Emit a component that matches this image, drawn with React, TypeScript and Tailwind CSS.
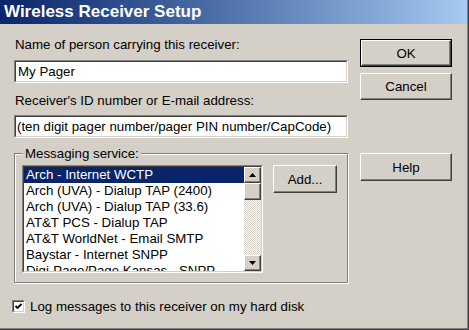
import React from 'react';

const services = [
  'Arch - Internet WCTP',
  'Arch (UVA) - Dialup TAP (2400)',
  'Arch (UVA) - Dialup TAP (33.6)',
  'AT&T PCS - Dialup TAP',
  'AT&T WorldNet - Email SMTP',
  'Baystar - Internet SNPP',
  'Digi-Page/Page Kansas - SNPP',
];

// raised 3d button face, win2000 style
function Btn({ label, className = '' }: { label: string; className?: string }) {
  return (
    <div
      className={`flex items-center justify-center border border-t-white border-l-white border-r-[#404040] border-b-[#404040] shadow-[inset_-1px_-1px_0_#808080] text-[13.3px] leading-[15px] text-black ${className}`}
    >
      {label}
    </div>
  );
}

function Sunken({ children, className = '' }: { children: React.ReactNode; className?: string }) {
  return (
    <div className={`border border-t-[#808080] border-l-[#808080] border-r-white border-b-white ${className}`}>
      <div className="h-full border border-t-[#404040] border-l-[#404040] border-r-[#d4d0c8] border-b-[#d4d0c8] bg-white">
        {children}
      </div>
    </div>
  );
}

function Arrow({ up }: { up?: boolean }) {
  return (
    <svg width="7" height="4" viewBox="0 0 7 4">
      <polygon points={up ? '3.5,0 7,4 0,4' : '0,0 7,0 3.5,4'} fill="#000" />
    </svg>
  );
}

function ScrollBtn({ up, className = '' }: { up?: boolean; className?: string }) {
  return (
    <div
      className={`flex items-center justify-center bg-[#d4d0c8] border border-t-white border-l-white border-r-[#404040] border-b-[#404040] shadow-[inset_-1px_-1px_0_#808080] ${className}`}
    >
      {up !== undefined && <Arrow up={up} />}
    </div>
  );
}

export default function App() {
  return (
    <div className="w-[469px] h-[330px] bg-[#d4d0c8] border-r border-b border-[#404040] font-['Liberation_Sans',Arial,sans-serif] text-black overflow-hidden">
      <div className="h-full flex flex-col border-r border-b border-[#808080]">
        {/* Title bar */}
        <div className="h-[24px] shrink-0 flex items-center pl-[4px] bg-linear-to-r from-[#0a246a] to-[#a6caf0]">
          <span className="text-white font-bold text-[17px] leading-[20px]">Wireless Receiver Setup</span>
        </div>

        <div className="flex flex-1 pl-[14px]">
          {/* Left column */}
          <div className="w-[334px] flex flex-col">
            <div className="mt-[13px] text-[13.3px] leading-[15px] pl-[1px]">Name of person carrying this receiver:</div>
            <Sunken className="mt-[8px] h-[23px]">
              <div className="pl-[2px] text-[13.3px] leading-[19px]">My Pager</div>
            </Sunken>

            <div className="mt-[10px] text-[13.3px] leading-[15px] pl-[1px]">Receiver's ID number or E-mail address:</div>
            <Sunken className="mt-[7px] h-[23px]">
              <div className="pl-[1px] text-[13.3px] leading-[19px] whitespace-nowrap">
                (ten digit pager number/pager PIN number/CapCode)
              </div>
            </Sunken>

            {/* Group box */}
            <div className="relative mt-[15px] h-[130px] border border-[#808080] shadow-[1px_1px_0_#fff,inset_1px_1px_0_#fff] pl-[7px] pt-[11px] flex items-start">
              <div className="absolute -top-[8px] left-[8px] px-[2px] bg-[#d4d0c8] text-[13.3px] leading-[15px]">
                Messaging service:
              </div>

              <Sunken className="w-[241px] h-[108px]">
                <div className="flex h-full">
                  <div className="flex-1 overflow-hidden">
                    {services.map((s, i) => (
                      <div
                        key={s}
                        className={`h-[16px] pl-[2px] text-[13.3px] leading-[16px] whitespace-nowrap ${
                          i === 0 ? 'bg-[#0a246a] text-white' : ''
                        }`}
                      >
                        {s}
                      </div>
                    ))}
                  </div>
                  <div className="w-[17px] flex flex-col">
                    <ScrollBtn up className="h-[16px]" />
                    <ScrollBtn className="h-[17px]" />
                    <div className="flex-1 bg-[repeating-conic-gradient(#ffffff_0_25%,#d4d0c8_0_50%)] bg-size-[2px_2px]" />
                    <ScrollBtn up={false} className="h-[16px]" />
                  </div>
                </div>
              </Sunken>

              <Btn label="Add..." className="ml-[10px] w-[64px] h-[28px]" />
            </div>

            {/* Checkbox */}
            <div className="mt-[16px] -ml-[2px] flex items-center">
              <Sunken className="w-[13px] h-[13px]">
                <svg width="9" height="9" viewBox="0 0 9 9" className="block">
                  <polyline points="1.5,4 3.5,6 7.5,2" fill="none" stroke="#000" strokeWidth="1.8" />
                </svg>
              </Sunken>
              <span className="ml-[5px] text-[13.3px] leading-[15px]">Log messages to this receiver on my hard disk</span>
            </div>
          </div>

          {/* Right column */}
          <div className="ml-[12px] w-[92px] flex flex-col">
            <div className="mt-[15px] h-[28px] border border-black">
              <Btn label="OK" className="h-full" />
            </div>
            <Btn label="Cancel" className="mt-[6px] h-[27px]" />
            <Btn label="Help" className="mt-[53px] h-[28px]" />
          </div>
        </div>
      </div>
    </div>
  );
}
